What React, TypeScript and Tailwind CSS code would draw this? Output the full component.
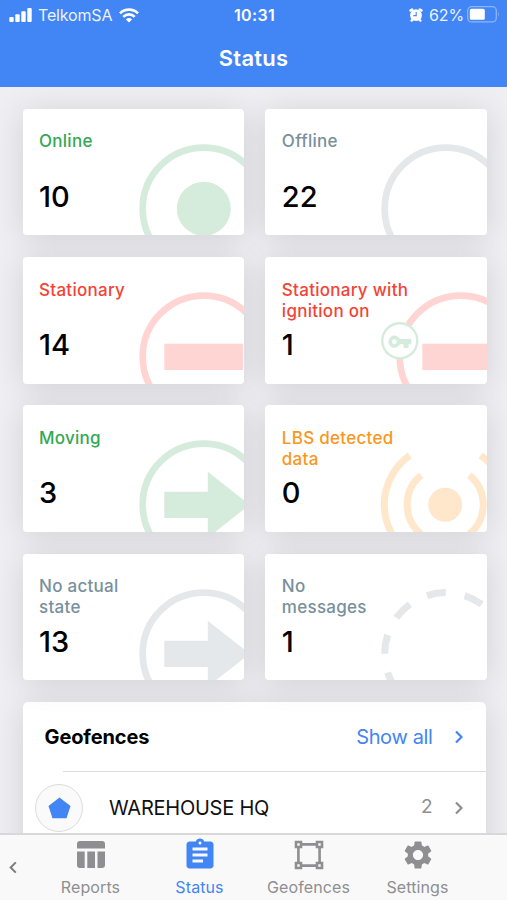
import React, { useState } from 'react';
import { MdAssignment, MdSettings } from 'react-icons/md';

type Tone = 'green' | 'gray' | 'red' | 'orange';

const textTone: Record<Tone, string> = {
  green: 'text-[#34a853]',
  gray: 'text-[#78909c]',
  red: 'text-[#f44336]',
  orange: 'text-[#f9981d]',
};

const artTone: Record<Tone, string> = {
  green: 'text-[#d5ecdc]',
  gray: 'text-[#e4e8ea]',
  red: 'text-[#ffd5d3]',
  orange: 'text-[#fee7cb]',
};

const Ring = ({ cx = 181 }: { cx?: number }) => (
  <circle cx={cx} cy="99.7" r="61.1" fill="none" stroke="currentColor" strokeWidth="6.7" />
);

const Arrow = () => (
  <path d="M141.5 86.7H185V66.7L227 99.7L185 132.7V113H141.5Z" fill="currentColor" />
);

const art: Record<string, React.ReactNode> = {
  online: (
    <>
      <Ring />
      <circle cx="181" cy="99.7" r="27" fill="currentColor" />
    </>
  ),
  offline: <Ring />,
  stationary: (
    <>
      <Ring />
      <rect x="141.5" y="86.7" width="78.7" height="26.3" fill="currentColor" />
    </>
  ),
  ignition: (
    <>
      <Ring cx={196} />
      <rect x="157.5" y="86.7" width="78.7" height="26.3" fill="currentColor" />
      <g className="text-[#d5ecdc]">
        <circle cx="135" cy="83.7" r="17.5" fill="#fff" stroke="currentColor" strokeWidth="2.4" />
        <path
          d="M135.2 82.1a6.1 6.1 0 1 0 0 5.2h3.6v3.6h5v-3.6h2.6v-5.2ZM129.6 87.1a2.4 2.4 0 1 1 0-4.8 2.4 2.4 0 0 1 0 4.8Z"
          fill="currentColor"
        />
      </g>
    </>
  ),
  moving: (
    <>
      <Ring />
      <Arrow />
    </>
  ),
  lbs: (
    <>
      <circle cx="180.4" cy="99.7" r="17" fill="currentColor" />
      <g fill="none" stroke="currentColor" strokeWidth="7">
        <path d="M156.4 70.2A38 38 0 0 0 156.4 129.2M204.4 70.2A38 38 0 0 1 204.4 129.2" />
        <path d="M144.9 50.4A60.6 60.6 0 0 0 144.9 149M215.9 50.4A60.6 60.6 0 0 1 215.9 149" />
      </g>
    </>
  ),
  messages: (
    <circle
      cx="181"
      cy="99.7"
      r="61.1"
      fill="none"
      stroke="currentColor"
      strokeWidth="7"
      pathLength={360}
      strokeDasharray="18 18"
    />
  ),
};

const statuses: { label: string; count: number; tone: Tone; icon: string; width: string }[] = [
  { label: 'Online', count: 10, tone: 'green', icon: 'online', width: 'w-[140px]' },
  { label: 'Offline', count: 22, tone: 'gray', icon: 'offline', width: 'w-[140px]' },
  { label: 'Stationary', count: 14, tone: 'red', icon: 'stationary', width: 'w-[140px]' },
  { label: 'Stationary with ignition on', count: 1, tone: 'red', icon: 'ignition', width: 'w-[140px]' },
  { label: 'Moving', count: 3, tone: 'green', icon: 'moving', width: 'w-[140px]' },
  { label: 'LBS detected data', count: 0, tone: 'orange', icon: 'lbs', width: 'w-[130px]' },
  { label: 'No actual state', count: 13, tone: 'gray', icon: 'moving', width: 'w-[100px]' },
  { label: 'No messages', count: 1, tone: 'gray', icon: 'messages', width: 'w-[100px]' },
];

const Chevron = ({ className }: { className: string }) => (
  <svg className={className} viewBox="0 0 8 14" fill="none" stroke="currentColor" strokeWidth="2.2">
    <path d="M1 1.5L6.5 7L1 12.5" />
  </svg>
);

const ReportsIcon = () => (
  <svg width="28" height="27" viewBox="0 0 28 27" fill="currentColor">
    <path d="M3 0H25Q28 0 28 3V7.5H0V3Q0 0 3 0Z" />
    <path d="M0 10.5H7.7V27H3Q0 27 0 24Z" />
    <path d="M10.3 10.5H18V27H10.3Z" />
    <path d="M20.5 10.5H28V24Q28 27 25 27H20.5Z" />
  </svg>
);

const GeofencesIcon = () => (
  <svg width="30" height="30" viewBox="0 0 30 30" fill="none" stroke="currentColor" strokeWidth="2.6">
    <path d="M8 4.4H22M8 25.6H22M4.4 8V22M25.6 8V22" />
    <path d="M2 2H7V7H2ZM23 2H28V7H23ZM2 23H7V28H2ZM23 23H28V28H23Z" />
  </svg>
);

const tabs = [
  { name: 'Reports', icon: <ReportsIcon /> },
  { name: 'Status', icon: <MdAssignment size={36} /> },
  { name: 'Geofences', icon: <GeofencesIcon /> },
  { name: 'Settings', icon: <MdSettings size={34} /> },
];

function StatusBar() {
  return (
    <div className="grid h-[30px] grid-cols-[1fr_auto_1fr] items-center pl-[9px] pr-[7px] text-[16px]">
      <div className="flex items-center">
        <svg width="23" height="14" viewBox="0 0 23 14" fill="currentColor">
          <rect x="0.3" y="9" width="4.4" height="5" rx="1" />
          <rect x="6.3" y="6.3" width="4.4" height="7.7" rx="1" />
          <rect x="12.3" y="3.3" width="4.4" height="10.7" rx="1" />
          <rect x="18.3" y="0" width="4.4" height="14" rx="1" />
        </svg>
        <span className="ml-[6px] tracking-[-0.01em] opacity-90">TelkomSA</span>
        <svg className="ml-[7px]" width="20" height="15" viewBox="0 0 20 15" fill="none" stroke="currentColor" strokeWidth="2.6">
          <path d="M1 5.3A12.8 12.8 0 0 1 19 5.3" />
          <path d="M4.3 8.8A8 8 0 0 1 15.7 8.8" />
          <path d="M10 14.6L6.9 11.5A4.5 4.5 0 0 1 13.1 11.5Z" fill="currentColor" stroke="none" />
        </svg>
      </div>
      <span className="font-semibold tracking-[0.02em]">10:31</span>
      <div className="flex items-center justify-end">
        <svg width="14" height="14" viewBox="0 0 14 14">
          <g stroke="#fff" strokeWidth="2.4" strokeLinecap="round">
            <path d="M1.5 2.6L3.2 1.4M12.5 2.6L10.8 1.4M2.6 12.6L3.6 11.6M11.4 12.6L10.4 11.6" />
          </g>
          <circle cx="7" cy="7.2" r="5.9" fill="#fff" />
          <path d="M7.2 4V7.6H4.4" fill="none" stroke="#4285f4" strokeWidth="1.1" />
        </svg>
        <span className="ml-[6px] tracking-[-0.01em] opacity-90">62%</span>
        <svg className="ml-[3px] -mt-[2px]" width="33" height="17" viewBox="0 0 33 17">
          <rect x="0.7" y="0.7" width="28.6" height="15.2" rx="4" fill="none" stroke="#fff" strokeOpacity="0.4" strokeWidth="1.3" />
          <rect x="2.8" y="2.8" width="15" height="11" rx="1.6" fill="#fff" />
          <path d="M31 5.8Q32.6 8.3 31 10.8Z" fill="#fff" fillOpacity="0.5" />
        </svg>
      </div>
    </div>
  );
}

export default function App() {
  const [activeTab, setActiveTab] = useState('Status');

  return (
    <div className="flex h-[900px] w-[507px] flex-col overflow-hidden bg-[#eeeef3] font-['Inter',sans-serif]">
      <header className="h-[87px] shrink-0 bg-[#4285f4] text-white">
        <StatusBar />
        <h1 className="pt-[11.5px] text-center text-[22px] leading-[32px] font-semibold tracking-[0.01em]">Status</h1>
      </header>

      <main className="min-h-0 flex-1 overflow-hidden pt-[21.7px] pl-[22.5px]">
        <div className="grid w-[464.2px] grid-cols-2 gap-x-[21.5px] gap-y-[21.6px]">
          {statuses.map((s) => (
            <div key={s.label} className="rounded-[4px] shadow-[0_3px_32px_rgba(0,0,0,0.12)]">
              <div className="relative h-[126.7px] overflow-hidden rounded-[4px] bg-white pt-[22.6px] pl-[16.5px]">
                <svg
                  className={`absolute top-0 left-0 ${artTone[s.tone]}`}
                  width="221.4"
                  height="126.7"
                  viewBox="0.2 0 221.4 126.7"
                >
                  {art[s.icon]}
                </svg>
                <p className={`relative h-[42px] text-[17px] leading-[21px] font-medium tracking-[0.016em] ${s.width} ${textTone[s.tone]}`}>
                  {s.label}
                </p>
                <p className="relative mt-[5.6px] text-[29px] leading-[36px] font-medium text-black">{s.count}</p>
              </div>
            </div>
          ))}
        </div>

        <section className="mt-[21.6px] h-[200px] w-[463px] rounded-[5px] bg-white shadow-[0_3px_32px_rgba(0,0,0,0.12)]">
          <div className="flex h-[69px] items-center pt-[2px] pr-[23px] pl-[22px]">
            <h2 className="flex-1 text-[20px] font-bold tracking-[-0.006em] text-black">Geofences</h2>
            <span className="text-[20px] tracking-[-0.018em] text-[#4285f4]">Show all</span>
            <Chevron className="ml-[22px] h-[14px] w-[8px] text-[#4285f4]" />
          </div>
          <div className="ml-[40px] h-[1.5px] bg-[#dcdce0]" />
          <div className="flex h-[70.5px] items-center pr-[23px] pl-[12.5px]">
            <div className="flex size-[48px] items-center justify-center rounded-full border border-[#dcdcdc] bg-[#fafafa]">
              <svg width="23" height="22" viewBox="0 0 23 22">
                <path d="M11.5 0.5L22.5 9L18.5 21.2H4.5L0.5 9Z" fill="#4285f4" />
              </svg>
            </div>
            <span className="ml-[26px] flex-1 text-[20px] tracking-[-0.012em] text-[#111]">WAREHOUSE HQ</span>
            <span className="text-[19px] text-[#8e8e8e]">2</span>
            <Chevron className="ml-[22px] h-[14px] w-[8px] text-[#8e8e8e]" />
          </div>
        </section>
      </main>

      <nav className="flex h-[67px] shrink-0 border-t-2 border-[#d8d8da] bg-[#f9f9f9]">
        <div className="flex w-[36px] items-center pl-[9px]">
          <Chevron className="h-[13px] w-[8px] rotate-180 text-[#7d7d7d]" />
        </div>
        {tabs.map((tab) => (
          <button
            key={tab.name}
            onClick={() => setActiveTab(tab.name)}
            className={`flex w-[109px] flex-col items-center ${activeTab === tab.name ? 'text-[#4285f4]' : 'text-[#8f8f91]'}`}
          >
            <span className="flex h-[39px] items-center">{tab.icon}</span>
            <span className="mt-[3px] text-[16px] leading-[20px] tracking-[0.006em]">{tab.name}</span>
          </button>
        ))}
      </nav>
    </div>
  );
}
